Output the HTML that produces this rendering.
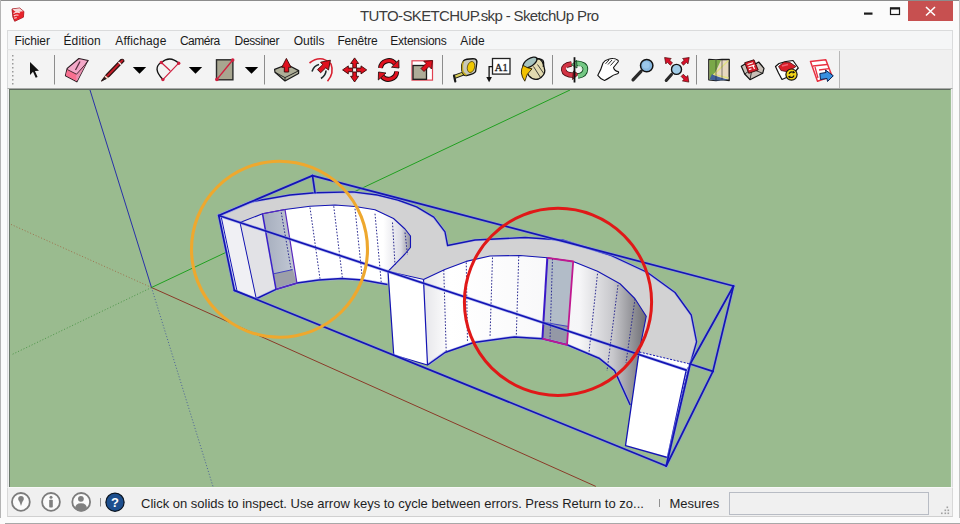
<!DOCTYPE html>
<html><head><meta charset="utf-8">
<style>
*{margin:0;padding:0;box-sizing:border-box}
html,body{width:960px;height:524px;overflow:hidden;background:#fbfbfb;font-family:"Liberation Sans",sans-serif}
.abs{position:absolute}
#win{position:absolute;left:0;top:0;width:960px;height:524px;background:#fbfbfb}
#bt{position:absolute;left:0;top:0;width:960px;height:1px;background:#8c8c8c}
#bl{position:absolute;left:0;top:0;width:1px;height:518px;background:#b4b4b4}
#br{position:absolute;left:959px;top:0;width:1px;height:518px;background:#c4c4c4}
#bb{position:absolute;left:5px;top:523px;width:955px;height:1px;background:#a8a8a8}
#title{position:absolute;left:360px;top:7px;font-size:15px;color:#3c3c3c;letter-spacing:-0.63px;white-space:nowrap}
#close{position:absolute;left:908px;top:1px;width:45px;height:20px;background:#c75050}
#menu{position:absolute;left:7px;top:30px;width:946px;height:20px;background:#f5f6f7;border-top:1px solid #dadbdc;border-left:1px solid #dadbdc;border-right:1px solid #dadbdc;border-bottom:1px solid #e6e6e6}
.mi{position:absolute;top:3px;font-size:12px;color:#1a1a1a;white-space:nowrap}
#tb{position:absolute;left:7px;top:50px;width:946px;height:38px;background:#f0f0f0;border-left:1px solid #dadbdc;border-right:1px solid #dadbdc}
#tbp{position:absolute;left:0;top:1px;width:832px;height:37px;background:#f3f3f3;border-right:1px solid #b8b8b8}
#vp{position:absolute;left:7px;top:88px;width:946px;height:399px;background:#f0f0f0;border-top:1px solid #a8aaa8;border-left:1px solid #dadbdc;border-right:1px solid #dadbdc}
#vpi{position:absolute;left:1px;top:0;width:942px;height:398px;background:#9abb8f;border-top:1px solid #5e6a5e;border-left:1px solid #6a786a;border-right:1px solid #a0c098}
#sb{position:absolute;left:7px;top:487px;width:946px;height:30px;background:#f0f0f0;border-left:1px solid #d8d8d8;border-right:1px solid #d8d8d8;border-bottom:1px solid #d0d0d0;border-top:1px solid #f8f8f8}
.st{position:absolute;font-size:13px;color:#1e1e1e;white-space:nowrap}
</style></head><body>
<div id="win"><div id="bt"></div><div id="bl"></div><div id="br"></div><div id="bb"></div>
 <div id="title">TUTO-SKETCHUP.skp - SketchUp Pro</div>
 <div id="close"></div>
 <div id="menu">
  <span class="mi" style="left:6.5px;letter-spacing:-0.1px">Fichier</span>
  <span class="mi" style="left:55.5px;letter-spacing:0.1px">Édition</span>
  <span class="mi" style="left:107.3px;letter-spacing:0.15px">Affichage</span>
  <span class="mi" style="left:171.9px;letter-spacing:-0.48px">Caméra</span>
  <span class="mi" style="left:226.6px;letter-spacing:-0.36px">Dessiner</span>
  <span class="mi" style="left:285.75px">Outils</span>
  <span class="mi" style="left:329.5px;letter-spacing:-0.21px">Fenêtre</span>
  <span class="mi" style="left:382.3px;letter-spacing:-0.25px">Extensions</span>
  <span class="mi" style="left:452.3px;letter-spacing:0.1px">Aide</span>
 </div>
 <div id="tb"><div id="tbp"></div></div>
 <div id="vp"><div id="vpi"></div></div>
 <div id="sb">
  <span class="st" style="left:133px;top:8px">Click on solids to inspect. Use arrow keys to cycle between errors. Press Return to zo...</span>
  <span class="st" style="left:661.5px;top:8px">Mesures</span>
  <div class="abs" style="left:721px;top:4px;width:200px;height:23px;border:1px solid #b8bcc4;background:#f0f0f0"></div>
 </div>
</div>
<div style="position:absolute;left:10px;top:90px;width:940px;height:397px;overflow:hidden">
 <div style="position:absolute;left:-10px;top:-90px;width:960px;height:524px">
<svg width="960" height="524" style="position:absolute;left:0;top:0">
<defs>
<linearGradient id="lw" gradientUnits="userSpaceOnUse" x1="285" y1="0" x2="411" y2="0"><stop offset="0" stop-color="#ffffff"/><stop offset="0.78" stop-color="#ffffff"/><stop offset="0.92" stop-color="#dcdce4"/><stop offset="1" stop-color="#8c8c9c"/></linearGradient>
<linearGradient id="rw" gradientUnits="userSpaceOnUse" x1="424" y1="0" x2="646" y2="0"><stop offset="0" stop-color="#e6e6ea"/><stop offset="0.12" stop-color="#ffffff"/><stop offset="0.7" stop-color="#f6f6f8"/><stop offset="0.85" stop-color="#c8c8cc"/><stop offset="1" stop-color="#6e6e74"/></linearGradient>
<linearGradient id="hl" gradientUnits="userSpaceOnUse" x1="262" y1="0" x2="297" y2="0"><stop offset="0" stop-color="#a4acbc"/><stop offset="1" stop-color="#c4cad6"/></linearGradient>
</defs>
<line x1="90" y1="90" x2="151.5" y2="287.5" stroke="#2830a8" stroke-width="1"/>
<line x1="11" y1="224.4" x2="151.5" y2="287.5" stroke="#a04828" stroke-width="0.9" stroke-dasharray="1 2" opacity="0.7"/>
<line x1="151.5" y1="287.5" x2="11" y2="355" stroke="#208020" stroke-width="0.9" stroke-dasharray="1 2" opacity="0.7"/>
<line x1="151.5" y1="287.5" x2="213" y2="486.5" stroke="#2030a0" stroke-width="0.9" stroke-dasharray="1 2" opacity="0.7"/>
<line x1="151.5" y1="287.5" x2="595.8" y2="486.4" stroke="#8a3a28" stroke-width="1"/>
<line x1="151.5" y1="287.5" x2="570" y2="90" stroke="#20a020" stroke-width="1"/>
<polygon points="218.75,215.5 250,202 290,195 315,192.75 352.5,191.9 377.5,195 397.8,200 416.6,206.9 433.8,217.2 445,231.8 447.6,245.5 475,240 525,237.5 562.5,240 610,255 647.5,272.5 675,292.5 691.25,315 696.6,341.8 690.2,364.0 639.4,352 638.7,354.7 642.5,335 646.25,316.25 635,298.75 620,283.75 597.5,271.25 573.2,261.5 547.3,257.8 520,255.5 490,256 466.2,261.4 444.8,269.4 423.5,279.4 388,271.4 405,254 410.5,247.5 410.5,236 405,229 393.5,218.5 375,209.8 355,206.5 335,205 310,206.25 285,209.5 262.5,213.75 240,222.5 218.75,215.5" fill="#d2d2d3"/>
<polygon points="218.75,215.5 240,222.5 256.25,298.75 234.4,290.4" fill="#f0f0f4"/>
<polygon points="240,222.5 262.5,213.75 276,289.4 256.25,298.75" fill="#e2e2e6"/>
<polygon points="285,209.5 310,206.25 335,205 355,206.5 375,209.8 393.5,218.5 405,229 410.5,236 410.5,247.5 405,254 388,271.4 387.5,284.5 362.5,280 341.7,278.6 318.75,280 296.9,283.1" fill="url(#lw)"/>
<polygon points="262.5,213.75 285,209.5 296.9,283.1 276,289.4" fill="url(#hl)"/>
<polygon points="273.75,273.75 292.7,269.6 296.9,283.1 276,289.4" fill="#9c9fa8"/>
<polygon points="388,271.4 423.5,279.4 427.5,365 393.75,355" fill="#ffffff"/>
<polygon points="423.5,279.4 444.8,269.4 466.2,261.4 490,256 520,255.5 547.3,257.8 573.2,261.5 597.5,271.25 620,283.75 635,298.75 646.25,316.25 642.5,335 638.7,354.7 630.2,405 614.6,370.7 599,358.2 567,344.8 542.4,338.7 514.5,336.9 473.8,342.5 445,352.5 427.5,365" fill="url(#rw)"/>
<polygon points="547.3,257.8 573.2,261.5 567,344.8 542.4,338.7" fill="#b2bcc8"/>
<polygon points="543.6,322.3 568.2,326.4 567,344.8 542.4,338.7" fill="#9498a6"/>
<polygon points="639.4,352 690.2,364 686.2,370.1 638.7,354.7" fill="#ffffff"/>
<polygon points="638.7,354.7 686.2,370.1 667.5,457.5 625.5,445.7" fill="#ffffff"/>
<polygon points="686.2,370.1 690.2,364 666.2,466 667.5,457.5" fill="#e4e8f8"/>
<line x1="281.25" y1="212.5" x2="291.25" y2="270" stroke="#2a2a90" stroke-width="1" stroke-dasharray="1.6 1.6"/>
<line x1="310" y1="207.5" x2="320" y2="278.75" stroke="#2a2a90" stroke-width="1" stroke-dasharray="1.6 1.6"/>
<line x1="333.75" y1="206.25" x2="342.5" y2="278.75" stroke="#2a2a90" stroke-width="1" stroke-dasharray="1.6 1.6"/>
<line x1="355" y1="208.75" x2="362.5" y2="280" stroke="#2a2a90" stroke-width="1" stroke-dasharray="1.6 1.6"/>
<line x1="375" y1="213.75" x2="381.25" y2="282.5" stroke="#2a2a90" stroke-width="1" stroke-dasharray="1.6 1.6"/>
<line x1="392.5" y1="222.5" x2="395" y2="265" stroke="#2a2a90" stroke-width="1" stroke-dasharray="1.6 1.6"/>
<line x1="405" y1="232.5" x2="407.5" y2="255" stroke="#2a2a90" stroke-width="1" stroke-dasharray="1.6 1.6"/>
<line x1="443.75" y1="270" x2="446.25" y2="352.5" stroke="#2a2a90" stroke-width="1" stroke-dasharray="1.6 1.6"/>
<line x1="466.25" y1="262.5" x2="467.5" y2="342.5" stroke="#2a2a90" stroke-width="1" stroke-dasharray="1.6 1.6"/>
<line x1="492.5" y1="257.5" x2="490" y2="337.5" stroke="#2a2a90" stroke-width="1" stroke-dasharray="1.6 1.6"/>
<line x1="518.75" y1="256.25" x2="516.25" y2="337.5" stroke="#2a2a90" stroke-width="1" stroke-dasharray="1.6 1.6"/>
<line x1="552.5" y1="258.75" x2="550" y2="340" stroke="#2a2a90" stroke-width="1" stroke-dasharray="1.6 1.6"/>
<line x1="597.5" y1="273.75" x2="588.75" y2="355" stroke="#2a2a90" stroke-width="1" stroke-dasharray="1.6 1.6"/>
<line x1="618" y1="285" x2="607" y2="371" stroke="#2a2a90" stroke-width="1" stroke-dasharray="1.6 1.6"/>
<line x1="635" y1="299" x2="626" y2="363" stroke="#2a2a90" stroke-width="1" stroke-dasharray="1.6 1.6"/>
<polyline points="218.75,215.5 250,202 290,195 315,192.75 352.5,191.9 377.5,195 397.8,200 416.6,206.9 433.8,217.2 445,231.8 447.6,245.5 475,240 525,237.5 562.5,240 610,255 647.5,272.5 675,292.5 691.25,315 696.6,341.8 690.2,364.0" fill="none" stroke="#9ca4f0" stroke-width="2.75" stroke-linejoin="round" opacity="0.6"/>
<polyline points="218.75,215.5 250,202 290,195 315,192.75 352.5,191.9 377.5,195 397.8,200 416.6,206.9 433.8,217.2 445,231.8 447.6,245.5 475,240 525,237.5 562.5,240 610,255 647.5,272.5 675,292.5 691.25,315 696.6,341.8 690.2,364.0" fill="none" stroke="#1414b4" stroke-width="1.35" stroke-linejoin="round" />
<polyline points="240,222.5 262.5,213.75 285,209.5 310,206.25 335,205 355,206.5 375,209.8 393.5,218.5 405,229 410.5,236 410.5,247.5 405,254 388,271.4" fill="none" stroke="#1414b4" stroke-width="1.1" stroke-linejoin="round" />
<polyline points="423.5,279.4 444.8,269.4 466.2,261.4 490,256 520,255.5 547.3,257.8 573.2,261.5 597.5,271.25 620,283.75 635,298.75 646.25,316.25 642.5,335 638.7,354.7" fill="none" stroke="#1414b4" stroke-width="1.1" stroke-linejoin="round" />
<polyline points="388,271.4 423.5,279.4" fill="none" stroke="#1414b4" stroke-width="1" stroke-linejoin="round" />
<polyline points="256.25,298.75 276,289.4 296.9,283.1 318.75,280 341.7,278.6 362.5,280 387.5,284.5" fill="none" stroke="#9ca4f0" stroke-width="2.9" stroke-linejoin="round" opacity="0.6"/>
<polyline points="256.25,298.75 276,289.4 296.9,283.1 318.75,280 341.7,278.6 362.5,280 387.5,284.5" fill="none" stroke="#1414b4" stroke-width="1.5" stroke-linejoin="round" />
<polyline points="427.5,365 445,352.5 473.8,342.5 514.5,336.9 542.4,338.7 567,344.8 599,358.2 614.6,370.7 630.2,405" fill="none" stroke="#9ca4f0" stroke-width="2.9" stroke-linejoin="round" opacity="0.6"/>
<polyline points="427.5,365 445,352.5 473.8,342.5 514.5,336.9 542.4,338.7 567,344.8 599,358.2 614.6,370.7 630.2,405" fill="none" stroke="#1414b4" stroke-width="1.5" stroke-linejoin="round" />
<polyline points="240,222.5 256.25,298.75" fill="none" stroke="#1414b4" stroke-width="1" stroke-linejoin="round" />
<polyline points="234.4,290.4 256.25,298.75" fill="none" stroke="#1414b4" stroke-width="1.2" stroke-linejoin="round" />
<polyline points="388,271.4 393.75,355 427.5,365 423.5,279.4" fill="none" stroke="#1414b4" stroke-width="1.2" stroke-linejoin="round" />
<polyline points="638.7,354.7 625.5,445.7 667.5,457.5 686.2,370.1" fill="none" stroke="#1414b4" stroke-width="1.3" stroke-linejoin="round" />
<polyline points="639.4,352 690.2,364.0" fill="none" stroke="#1414b4" stroke-width="1" stroke-linejoin="round" stroke-dasharray="2 1.5"/>
<polyline points="221,216 237,291" fill="none" stroke="#1414b4" stroke-width="1" stroke-linejoin="round" />
<polyline points="688.3,367 666.8,461.5" fill="none" stroke="#1414b4" stroke-width="1" stroke-linejoin="round" stroke-dasharray="2.5 1.5"/>
<polyline points="262.5,213.75 276,289.4" fill="none" stroke="#3a20c8" stroke-width="1.5" stroke-linejoin="round" />
<polyline points="262.5,213.75 285,209.5 296.9,283.1 276,289.4" fill="none" stroke="#5a28c0" stroke-width="1.2" stroke-linejoin="round" />
<polyline points="273.75,273.75 292.7,269.6" fill="none" stroke="#4040c0" stroke-width="1" stroke-linejoin="round" />
<polyline points="543.6,322.3 568.2,326.4" fill="none" stroke="#4040c0" stroke-width="1" stroke-linejoin="round" />
<polyline points="542.4,338.7 547.3,257.8" fill="none" stroke="#3a18c8" stroke-width="2" stroke-linejoin="round" />
<polyline points="547.3,257.8 573.2,261.5 567,344.8 542.4,338.7" fill="none" stroke="#c01890" stroke-width="1.8" stroke-linejoin="round" />
<line x1="218.75" y1="215.5" x2="312.5" y2="175.6" stroke="#8c98ec" stroke-width="3.2" stroke-linecap="round" opacity="0.6"/>
<line x1="312.5" y1="175.6" x2="733.5" y2="286.0" stroke="#8c98ec" stroke-width="3.2" stroke-linecap="round" opacity="0.6"/>
<line x1="312.5" y1="175.6" x2="315" y2="192.75" stroke="#8c98ec" stroke-width="3.2" stroke-linecap="round" opacity="0.6"/>
<line x1="218.75" y1="215.5" x2="686.2" y2="370.1" stroke="#8c98ec" stroke-width="3.2" stroke-linecap="round" opacity="0.6"/>
<line x1="733.5" y1="286.0" x2="690.2" y2="364.0" stroke="#8c98ec" stroke-width="3.2" stroke-linecap="round" opacity="0.6"/>
<line x1="733.5" y1="286.0" x2="712.9" y2="371.4" stroke="#8c98ec" stroke-width="3.2" stroke-linecap="round" opacity="0.6"/>
<line x1="690.2" y1="364.0" x2="712.9" y2="371.4" stroke="#8c98ec" stroke-width="3.2" stroke-linecap="round" opacity="0.6"/>
<line x1="712.9" y1="371.4" x2="666.2" y2="466.0" stroke="#8c98ec" stroke-width="3.2" stroke-linecap="round" opacity="0.6"/>
<line x1="234.4" y1="290.4" x2="666.2" y2="466.0" stroke="#8c98ec" stroke-width="3.2" stroke-linecap="round" opacity="0.6"/>
<line x1="218.75" y1="215.5" x2="234.4" y2="290.4" stroke="#8c98ec" stroke-width="3.2" stroke-linecap="round" opacity="0.6"/>
<line x1="690.2" y1="364.0" x2="666.2" y2="466.0" stroke="#8c98ec" stroke-width="3.2" stroke-linecap="round" opacity="0.6"/>
<line x1="218.75" y1="215.5" x2="312.5" y2="175.6" stroke="#1414b4" stroke-width="1.7" stroke-linecap="round"/>
<line x1="312.5" y1="175.6" x2="733.5" y2="286.0" stroke="#1414b4" stroke-width="1.7" stroke-linecap="round"/>
<line x1="312.5" y1="175.6" x2="315" y2="192.75" stroke="#1414b4" stroke-width="1.7" stroke-linecap="round"/>
<line x1="218.75" y1="215.5" x2="686.2" y2="370.1" stroke="#1414b4" stroke-width="1.7" stroke-linecap="round"/>
<line x1="733.5" y1="286.0" x2="690.2" y2="364.0" stroke="#1414b4" stroke-width="1.7" stroke-linecap="round"/>
<line x1="733.5" y1="286.0" x2="712.9" y2="371.4" stroke="#1414b4" stroke-width="1.7" stroke-linecap="round"/>
<line x1="690.2" y1="364.0" x2="712.9" y2="371.4" stroke="#1414b4" stroke-width="1.7" stroke-linecap="round"/>
<line x1="712.9" y1="371.4" x2="666.2" y2="466.0" stroke="#1414b4" stroke-width="1.7" stroke-linecap="round"/>
<line x1="234.4" y1="290.4" x2="666.2" y2="466.0" stroke="#1414b4" stroke-width="1.7" stroke-linecap="round"/>
<line x1="218.75" y1="215.5" x2="234.4" y2="290.4" stroke="#1414b4" stroke-width="1.7" stroke-linecap="round"/>
<line x1="690.2" y1="364.0" x2="666.2" y2="466.0" stroke="#1414b4" stroke-width="1.7" stroke-linecap="round"/>
<circle cx="279.5" cy="249.25" r="88" fill="none" stroke="#eea82e" stroke-width="3.1"/>
<circle cx="558" cy="301.9" r="93.6" fill="none" stroke="#e01818" stroke-width="3"/>
</svg>
 </div>
</div>
<svg width="960" height="524" style="position:absolute;left:0;top:0">
<!-- title logo -->
<g stroke-linejoin="round">
 <polygon points="12,9 19.7,8 23.9,11.5 23.4,17.2 14.7,21.3 12.9,17.2" fill="#e02028" stroke="#9a1018" stroke-width="0.8"/>
 <polygon points="12.3,9.3 19.7,8.3 23.5,11.5 16,12.3" fill="#f6dada"/>
 <polygon points="16,12.3 23.5,11.5 23.2,17 14.8,21" fill="#e8232b"/>
 <path d="M13.5,13.5 Q16.5,11.5 20,12.8 M13.8,16 Q16,14.5 18.5,15.2 M14.2,18.3 Q15.3,17.5 16.8,17.8" stroke="#fbe0e0" stroke-width="1.1" fill="none"/>
</g>
<!-- window buttons -->
<rect x="864" y="12.5" width="8.5" height="2.2" fill="#1a1a1a"/>
<rect x="890.5" y="8" width="9" height="6.5" fill="none" stroke="#1a1a1a" stroke-width="1.2"/>
<rect x="890" y="7.5" width="10" height="2" fill="#1a1a1a"/>
<path d="M926,7 L935,15.5 M935,7 L926,15.5" stroke="#fff" stroke-width="1.6"/>
<!-- gripper -->
<g fill="#9a9a9a">
 <rect x="12" y="55" width="1.5" height="1.5"/><rect x="12" y="59" width="1.5" height="1.5"/><rect x="12" y="63" width="1.5" height="1.5"/><rect x="12" y="67" width="1.5" height="1.5"/><rect x="12" y="71" width="1.5" height="1.5"/><rect x="12" y="75" width="1.5" height="1.5"/><rect x="12" y="79" width="1.5" height="1.5"/><rect x="12" y="83" width="1.5" height="1.5"/>
</g>
<!-- separators -->
<g stroke="#8c8c8c" stroke-width="1">
 <line x1="54.5" y1="55" x2="54.5" y2="84.5"/><line x1="264.5" y1="55" x2="264.5" y2="84.5"/><line x1="442.5" y1="55" x2="442.5" y2="84.5"/><line x1="552.5" y1="55" x2="552.5" y2="84.5"/><line x1="696.5" y1="55" x2="696.5" y2="84.5"/>
</g>
<!-- select arrow -->
<polygon points="30,62 30,75 33,71.8 35.7,77.8 37.6,77 34.9,71 39,70.8" fill="#111"/>
<!-- eraser -->
<polygon points="67.2,68.4 78.9,58.5 88.2,60.5 86.5,63 76.9,81.8 65.5,75.7" fill="#f4a8c8" stroke="#2a1a20" stroke-width="1.2" stroke-linejoin="round"/>
<polygon points="67.2,69.5 76.5,74.2 76.9,81.3 65.8,75.5" fill="#f87090"/>
<polygon points="76.5,74.2 86.5,63 76.9,81.3" fill="#e890b0"/>
<path d="M67.2,69.5 L76.5,74.2 L86.8,62.8" stroke="#3a2028" stroke-width="0.9" fill="none"/>
<path d="M80,61.5 L75.5,70" stroke="#5a3040" stroke-width="1.3"/>
<!-- pencil -->
<path d="M101.5,81 L106,75 L121,59.5 Q123.5,58.5 124,61 L109,76.5 Z" fill="#c81e2a" stroke="#2a1010" stroke-width="1.1" stroke-linejoin="round"/>
<path d="M101.5,81 L104.8,77.5 L106.5,79 Z" fill="#222"/>
<path d="M105,76 L108,78.8" stroke="#f4e8d0" stroke-width="1.4"/>
<path d="M118.5,62 L121.3,64.8" stroke="#f4f0f0" stroke-width="1.4"/>
<!-- dropdown triangles -->
<polygon points="132.8,67 146.2,67 139.5,73.8" fill="#000"/>
<polygon points="188.8,67 202.2,67 195.5,73.8" fill="#000"/>
<polygon points="244.8,67 258.2,67 251.5,73.8" fill="#000"/>
<!-- arc -->
<path d="M162.9,79.6 Q152,68 161.3,62.5 Q170,55 178.7,63.2" stroke="#111" stroke-width="1.4" fill="none"/>
<path d="M162.9,79.6 L178.7,63.2 M161.3,62.5 L170.2,70.8" stroke="#d02040" stroke-width="1.2"/>
<circle cx="161.3" cy="62.5" r="1.7" fill="#d02040"/><circle cx="178.7" cy="63.2" r="1.7" fill="#d02040"/><circle cx="162.9" cy="79.6" r="1.7" fill="#d02040"/>
<!-- rectangle -->
<rect x="216.5" y="59.8" width="16.4" height="20" fill="#a8a690" stroke="#2a2a2a" stroke-width="1.4"/>
<path d="M216.7,79.6 L232.9,59.8" stroke="#d02040" stroke-width="1.4"/>
<circle cx="216.9" cy="79.4" r="1.8" fill="#d02040"/><circle cx="232.7" cy="60.1" r="1.8" fill="#d02040"/>
<!-- push pull -->
<polygon points="274.6,69.4 287,64.5 298.7,70.6 298.6,73.4 285,81 275,72.3" fill="#aeae98" stroke="#1a1a1a" stroke-width="1.2" stroke-linejoin="round"/>
<path d="M275,72.3 L285,77.6 L298.6,70.8 M285,77.6 L285,81" stroke="#1a1a1a" stroke-width="0.9" fill="none"/>
<polygon points="286.4,58.4 291,67.3 288.7,67.3 288.7,72 284.3,72 284.3,67.3 281.8,67.3" fill="#e0101e" stroke="#3a0808" stroke-width="0.9" stroke-linejoin="round"/>
<!-- follow me -->
<path d="M309.5,63 Q321,54 331,64 Q334.5,73 327.5,81.3" stroke="#d82030" stroke-width="1.6" fill="none"/>
<path d="M312,71.5 Q314,65.5 319,64.5 M321,78.5 Q326,75 326,70.5" stroke="#1a2a2a" stroke-width="1.6" fill="none"/>
<polygon points="330.4,60.2 328.5,70 325.8,67.8 320.6,72.8 317.5,69.6 322.7,64.7 320.6,62.2" fill="#e0101e" stroke="#3a0808" stroke-width="0.9" stroke-linejoin="round"/>
<!-- move -->
<g fill="#e0101e" stroke="#3a0808" stroke-width="0.9" stroke-linejoin="round">
 <polygon points="354.6,57.9 358.6,63.5 356.4,63.5 356.4,67.9 352.8,67.9 352.8,63.5 350.6,63.5"/>
 <polygon points="354.6,82 358.6,76.3 356.4,76.3 356.4,72 352.8,72 352.8,76.3 350.6,76.3"/>
 <polygon points="342.6,69.9 348.3,65.9 348.3,68.1 352.6,68.1 352.6,71.7 348.3,71.7 348.3,73.9"/>
 <polygon points="366.7,69.9 361,65.9 361,68.1 356.6,68.1 356.6,71.7 361,71.7 361,73.9"/>
</g>
<!-- rotate -->
<path d="M380.5,68 A8.3,8.3 0 0 1 395,63.5" stroke="#1a0808" stroke-width="5" fill="none"/>
<path d="M380.5,68 A8.3,8.3 0 0 1 395,63.5" stroke="#e0101e" stroke-width="3.2" fill="none"/>
<polygon points="398.8,60 399,68 391.5,67.2" fill="#e0101e" stroke="#1a0808" stroke-width="0.8"/>
<path d="M396.7,71.5 A8.3,8.3 0 0 1 382.2,76.5" stroke="#1a0808" stroke-width="5" fill="none"/>
<path d="M396.7,71.5 A8.3,8.3 0 0 1 382.2,76.5" stroke="#e0101e" stroke-width="3.2" fill="none"/>
<polygon points="378.3,80 378.5,72 386,73" fill="#e0101e" stroke="#1a0808" stroke-width="0.8"/>
<!-- scale -->
<rect x="412" y="60.8" width="20.5" height="19.3" fill="#fff" stroke="#e04050" stroke-width="1.2"/>
<rect x="413" y="65.5" width="13.5" height="13.8" fill="#aeac98" stroke="#1a1a1a" stroke-width="1.3"/>
<polygon points="432.5,60.5 431.5,69 429,66.5 424,71.5 421,68.5 426,63.5 423.8,61.3" fill="#e0101e" stroke="#3a0808" stroke-width="0.8" stroke-linejoin="round"/>
<!-- tape -->
<path d="M454,77 L464,73.3" stroke="#1a1a1a" stroke-width="4" stroke-linecap="butt"/>
<path d="M454.3,76.9 L464,73.3" stroke="#d8cc58" stroke-width="2.2"/>
<path d="M454,75.5 L455.3,81.5" stroke="#1a1a1a" stroke-width="2.2" stroke-linecap="round"/>
<path d="M463.5,60.8 Q466,58.5 474.8,58.8 Q477.5,60 476.8,63 L475.6,71.5 Q474.5,73.8 466.5,75.6 Q463,76 461.8,70 Q461,64 463.5,60.8 Z" fill="#c8c8b8" stroke="#111" stroke-width="1.3" stroke-linejoin="round"/>
<path d="M463.5,61.5 Q461.5,66 463,72 Q464.5,74.5 466.5,75" stroke="#c0a820" stroke-width="1.5" fill="none"/>
<ellipse cx="471" cy="67" rx="3.6" ry="5.6" transform="rotate(15 471 67)" fill="#f0c800" stroke="#4a3a00" stroke-width="0.7"/>
<!-- text -->
<rect x="492.5" y="58.5" width="17.5" height="15.6" fill="#fff" stroke="#222" stroke-width="1.3"/>
<text x="494.8" y="70.6" font-family="Liberation Serif" font-size="10.5" fill="#1a1a1a" stroke="#1a1a1a" stroke-width="0.3" letter-spacing="0.2">A1</text>
<path d="M492.5,66.7 L489.1,66.7 L489.1,78" stroke="#111" stroke-width="1.3" fill="none"/>
<polygon points="486.3,77 491.9,77 489.1,82.2" fill="#111"/>
<!-- paint bucket -->
<path d="M522.8,66 L537,58.3 Q543,58 544.8,70.5 Q545,75.5 538.5,79 Q533,80.5 529,75.8 Z" fill="#e2dab0" stroke="#111" stroke-width="1.3" stroke-linejoin="round"/>
<path d="M533.5,66.5 L540.5,77.5 M537.5,64.5 L543.8,73.5" stroke="#1a1a1a" stroke-width="0.8"/>
<ellipse cx="530" cy="62.5" rx="8" ry="3.8" transform="rotate(-33 530 62.5)" fill="#a6c4c0" stroke="#111" stroke-width="1.3"/>
<path d="M536.5,59 Q545.5,57.5 543.2,66.8" stroke="#111" stroke-width="1.3" fill="none"/>
<path d="M523.2,65.5 Q518.8,72.5 524.8,81.2 Q526,74 532,68.8 Q528,68.5 523.2,65.5 Z" fill="#f2c200" stroke="#2a2000" stroke-width="0.9" stroke-linejoin="round"/>
<!-- orbit -->
<path d="M571.5,64 Q563.5,65 563.8,70 Q564.3,75 574.5,75.3" stroke="#4a0a10" stroke-width="5.6" fill="none"/>
<path d="M571.5,64 Q563.5,65 563.8,70 Q564.3,75 574.5,75.3" stroke="#d23444" stroke-width="4" fill="none"/>
<path d="M567,67.5 Q565.5,70 571,70.3" stroke="#fff" stroke-width="1.3" fill="none"/>
<polygon points="573.5,71 578.5,74.2 572.5,79.5" fill="#c82838" stroke="#4a0a10" stroke-width="0.8" stroke-linejoin="round"/>
<path d="M575.5,63.2 Q585.5,63.5 585.4,69 Q585.2,75 578,76" stroke="#0a4018" stroke-width="5.6" fill="none"/>
<path d="M575.5,63.2 Q585.5,63.5 585.4,69 Q585.2,75 578,76" stroke="#74c884" stroke-width="4" fill="none"/>
<path d="M578,66 Q583,66.5 581,69.5" stroke="#c8f0d0" stroke-width="1.2" fill="none"/>
<polygon points="576.5,60.5 571.5,64.8 577,68" fill="#80d090" stroke="#0a4018" stroke-width="0.8" stroke-linejoin="round"/>
<line x1="574.5" y1="57.2" x2="574.5" y2="82.5" stroke="#111" stroke-width="1.8"/>
<!-- hand -->
<path d="M597.8,75.3 Q601,70 603,63 Q605,60 608,59.5 Q611,58.3 613,58.5 Q616,58.5 617,59.8 Q619,60.5 618,62 L613.5,67.5 Q614.5,71 618,71.5 Q619.5,72.8 617.5,73.8 Q613,75 610.5,77 Q607.5,79 604.5,80.5 Q601,79.5 597.8,75.3 Z" fill="#fff" stroke="#111" stroke-width="1.1" stroke-linejoin="round"/>
<path d="M605.5,63.8 L609,60 M608,64.5 L612,60 M610.5,65.5 L615,60.5" stroke="#111" stroke-width="0.9"/>
<!-- zoom -->
<path d="M633,79.8 L641,71.3" stroke="#2a2a2a" stroke-width="3.2" stroke-linecap="round"/>
<circle cx="646.7" cy="65.6" r="6.2" fill="#88b8e0" stroke="#111" stroke-width="1.5"/>
<circle cx="646" cy="65" r="3.5" fill="#a8d0f0" opacity="0.6"/>
<!-- zoom extents -->
<path d="M666.2,80.5 L671.5,74.4" stroke="#2a2a2a" stroke-width="3" stroke-linecap="round"/>
<circle cx="676.5" cy="69.4" r="5" fill="#a0cce8" stroke="#111" stroke-width="1.4"/>
<g fill="#d8102a" stroke="#4a0808" stroke-width="0.7" stroke-linejoin="round">
 <polygon points="664.6,57.5 671.2,58.5 669.6,60.1 672.5,63 670.3,65.2 667.4,62.3 665.8,63.9"/>
 <polygon points="689.2,57.5 682.6,58.5 684.2,60.1 681.3,63 683.5,65.2 686.4,62.3 688,63.9"/>
 <polygon points="688.8,82.1 687.8,75.5 686.2,77.1 683.3,74.2 681.1,76.4 684,79.3 682.4,80.9"/>
</g>
<!-- map -->
<polygon points="708.8,59.3 716,60 722,59.3 729.2,59.5 729.2,80.5 722,79.5 716,80.5 708.8,79.8" fill="#e8d8c0" stroke="#1a1a1a" stroke-width="1.3" stroke-linejoin="round"/>
<polygon points="709.5,60 721,60 715.5,72 713,80 709.5,79.5" fill="#7aa848"/>
<polygon points="712,74 716,76 722,78 728.5,80 716,80.5 709.5,79.5" fill="#40609a"/>
<path d="M728.5,60.5 L714,74.5 L728.5,78" stroke="#e0e080" stroke-width="1.3" fill="none"/>
<path d="M716,60 L716,80.5 M722,59.3 L722,79.5" stroke="#1a1a1a" stroke-width="0.5"/>
<!-- warehouse -->
<polygon points="741.3,66.3 745,64 752,66 758.7,62 764,68.3 762.7,73.3 750,79.7 744.7,74" fill="#c8c0b8" stroke="#111" stroke-width="1.2" stroke-linejoin="round"/>
<path d="M744.7,74 L752,69 L762.7,73.3 M752,69 L750,79.7" stroke="#111" stroke-width="0.8" fill="none"/>
<polygon points="744.7,62.7 754,59.8 758.2,70 748.7,73.3" fill="#d41c28" stroke="#3a0808" stroke-width="0.9" stroke-linejoin="round"/>
<path d="M747.5,64.5 L753,62.8 M748.3,67 L754.5,65.2 M749,69.6 L751.5,68.8 M753,65.5 L754.5,69" stroke="#fff" stroke-width="1.2" fill="none"/>
<!-- share -->
<polygon points="775.5,66.5 779,63.5 786,61.5 793,60.5 798.3,68 792,75 782,79.5 778.5,73" fill="#fff" stroke="#111" stroke-width="1.2" stroke-linejoin="round"/>
<polygon points="778.5,66.5 784,62 790,62.5 796,66.5 788,72 781,70.5" fill="#d81e28" stroke="#3a0808" stroke-width="0.7"/>
<path d="M782,66 L788,64.5" stroke="#f06070" stroke-width="1.5"/>
<circle cx="791.5" cy="74.6" r="5.6" fill="#f2d418" stroke="#111" stroke-width="1.2"/>
<path d="M789,73.8 Q790.3,70.8 793.8,72.3 M794,75.6 Q792.8,78.5 789.3,76.9" stroke="#111" stroke-width="1.2" fill="none"/>
<polygon points="793.2,70.8 795.2,72.8 792.5,73.6" fill="#111"/>
<polygon points="789.8,78.4 787.8,76.4 790.5,75.6" fill="#111"/>
<!-- layout -->
<polygon points="810.5,61.5 825.8,59.8 832,76 817.5,81.2" fill="#fff" stroke="#e83040" stroke-width="1.5" stroke-linejoin="round"/>
<path d="M813,66 L827,64.5 M815,67 L818,78 M819,70 L829,68.7" stroke="#e83040" stroke-width="1.3" fill="none"/>
<polygon points="819.8,73.5 826,72.5 825.5,70 833.3,75.8 827.5,81.5 827,78.5 820.5,79.5" fill="#3890e0" stroke="#0a2050" stroke-width="1" stroke-linejoin="round"/>
<!-- status icons -->
<g fill="#fbfbfb" stroke="#7c7c7c" stroke-width="1.8">
 <circle cx="20.9" cy="501.9" r="8.9"/><circle cx="51" cy="501.9" r="8.9"/><circle cx="81.2" cy="501.9" r="8.9"/>
</g>
<circle cx="21" cy="498.8" r="2.8" fill="#808080"/>
<polygon points="18.8,499.5 23.2,499.5 21,506" fill="#808080"/>
<circle cx="51" cy="497.3" r="1.5" fill="#808080"/>
<rect x="49.2" y="499.8" width="3.6" height="7.8" rx="0.8" fill="#808080"/>
<circle cx="80.9" cy="498.8" r="2.9" fill="#808080"/>
<path d="M75,509 Q75,503.3 81,503.3 Q87,503.3 87,509 Q84,511.5 81,511.5 Q78,511.5 75,509 Z" fill="#808080"/>
<line x1="100.5" y1="498" x2="100.5" y2="506.5" stroke="#909090" stroke-width="1"/>
<line x1="659.5" y1="499" x2="659.5" y2="507" stroke="#909090" stroke-width="1"/>
<circle cx="115" cy="502.2" r="9.1" fill="#1d4f8e" stroke="#0a1420" stroke-width="1.2"/>
<text x="115" y="507.3" text-anchor="middle" font-family="Liberation Sans" font-weight="bold" font-size="13" fill="#fff">?</text>
<!-- resize grip -->
<g fill="#a0a0a0">
 <rect x="946.5" y="506.5" width="1.6" height="1.6"/><rect x="944.5" y="509.5" width="1.6" height="1.6"/><rect x="947.5" y="509.5" width="1.6" height="1.6"/><rect x="941" y="512.5" width="1.6" height="1.6"/><rect x="944.5" y="512.5" width="1.6" height="1.6"/><rect x="947.5" y="512.5" width="1.6" height="1.6"/>
</g>
</svg>

</body></html>
